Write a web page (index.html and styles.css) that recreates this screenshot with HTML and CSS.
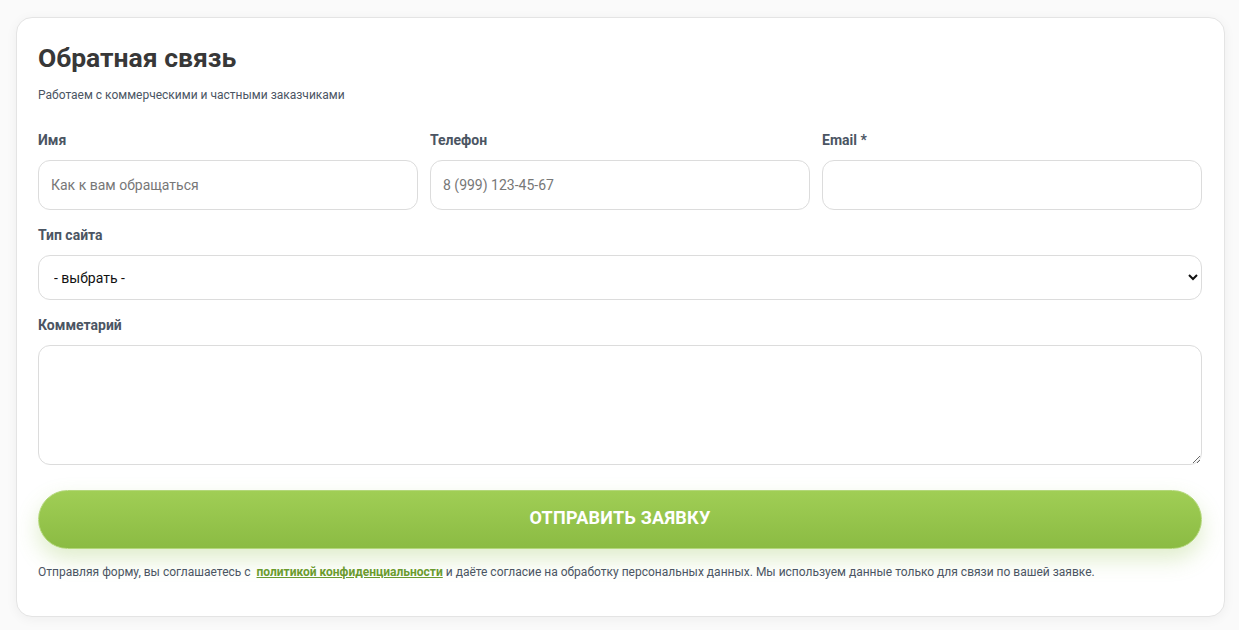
FILE: index.html
```html
<!DOCTYPE html>
<html lang="ru">
<head>
    <meta charset="UTF-8">
    <meta name="viewport" content="width=device-width, initial-scale=1.0">
    <title>Обратная связь</title>
    <link rel="stylesheet" href="styles.css">
</head>
<body>
    <div class="feedback-card">
        <h1>Обратная связь</h1>
        <p class="subtitle">Работаем с коммерческими и частными заказчиками</p>
        <form class="feedback-form" onsubmit="return false;">
            <div class="form-row">
                <div class="field">
                    <label for="name">Имя</label>
                    <input type="text" id="name" placeholder="Как к вам обращаться">
                </div>
                <div class="field">
                    <label for="phone">Телефон</label>
                    <input type="tel" id="phone" placeholder="8 (999) 123-45-67">
                </div>
                <div class="field">
                    <label for="email">Email *</label>
                    <input type="email" id="email">
                </div>
            </div>
            <div class="field">
                <label for="site-type">Тип сайта</label>
                <select id="site-type">
                    <option>- выбрать -</option>
                    <option>Лендинг</option>
                    <option>Корпоративный сайт</option>
                    <option>Интернет-магазин</option>
                </select>
            </div>
            <div class="field">
                <label for="comment">Комметарий</label>
                <textarea id="comment"></textarea>
            </div>
            <button type="submit" class="submit-button">Отправить заявку</button>
            <p class="agreement">Отправляя форму, вы соглашаетесь с &nbsp;<a href="#">политикой конфиденциальности</a> и даёте согласие на обработку персональных данных. Мы используем данные только для связи по вашей заявке.</p>
        </form>
    </div>
</body>
</html>
```

FILE: styles.css
```css
body {
    margin: 0;
    padding: 17px 14px 14px 16px;
    font-family: Roboto, "Liberation Sans", Arial, sans-serif;
    background-color: #fafafa;
    color: #333;
}
.feedback-card {
    background: #fff;
    border: 1px solid #e4e4e4;
    border-radius: 16px;
    box-shadow: 0 2px 12px rgba(0, 0, 0, 0.05);
    padding: 23px 22px 36px 21px;
}
h1 {
    margin: 0;
    font-size: 26.5px;
    line-height: 33px;
    font-weight: 700;
    color: #383838;
}
.subtitle {
    margin: 13px 0 0;
    font-size: 12px;
    line-height: 16px;
    color: #4b5563;
}
.feedback-form {
    margin-top: 27px;
}
.form-row {
    display: grid;
    grid-template-columns: repeat(3, 1fr);
    gap: 12px;
}
.field {
    display: flex;
    flex-direction: column;
    margin-bottom: 15px;
}
label {
    font-size: 14px;
    line-height: 20px;
    font-weight: 700;
    color: #4b5563;
    margin-bottom: 10px;
}
input,
select,
textarea {
    font-family: inherit;
    font-size: 14px;
    border: 1px solid #dcdcdc;
    border-radius: 12px;
    background: #fff;
    box-sizing: border-box;
    width: 100%;
}
input {
    height: 50px;
    padding: 0 12px;
    color: #333;
}
input::placeholder {
    color: #777;
}
select {
    height: 45px;
    padding: 0 6px 0 11px;
    color: #111;
}
textarea {
    height: 120px;
    padding: 10px 12px;
    resize: vertical;
}
/* field margin collapses into this one, so it carries the whole gap */
.submit-button {
    display: block;
    width: 100%;
    height: 59px;
    margin-top: 25px;
    padding: 0 0 4px;
    border: 1px solid #b3d77a;
    border-radius: 30px;
    background: linear-gradient(to bottom, #a0ce55, #8bbb43);
    box-shadow: 0 10px 22px rgba(140, 190, 70, 0.28);
    color: #fff;
    font-family: inherit;
    font-size: 18px;
    font-weight: 700;
    letter-spacing: 0.25px;
    text-transform: uppercase;
    cursor: pointer;
}
.agreement {
    margin: 15px 0 0;
    font-size: 12px;
    line-height: 16px;
    color: #4b5563;
}
.agreement a {
    color: #6b9b2e;
    font-weight: 700;
}
```
